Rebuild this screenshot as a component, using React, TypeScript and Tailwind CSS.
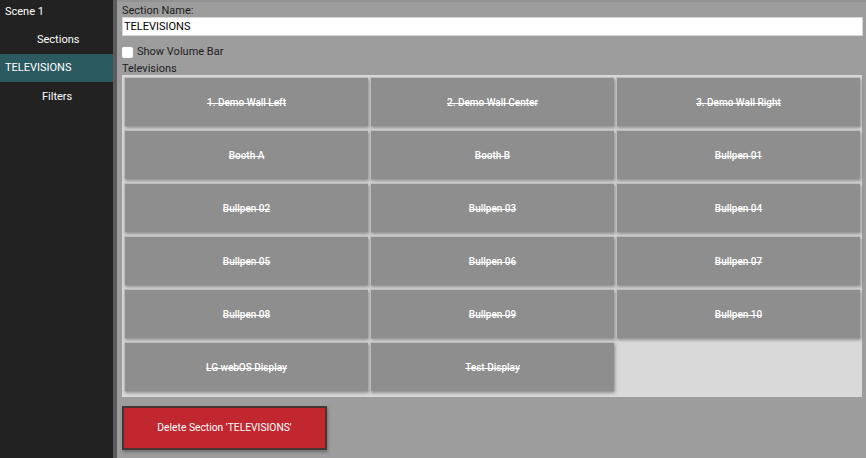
import React from "react";

const tvs = [
  "1. Demo Wall Left",
  "2. Demo Wall Center",
  "3. Demo Wall Right",
  "Booth A",
  "Booth B",
  "Bullpen 01",
  "Bullpen 02",
  "Bullpen 03",
  "Bullpen 04",
  "Bullpen 05",
  "Bullpen 06",
  "Bullpen 07",
  "Bullpen 08",
  "Bullpen 09",
  "Bullpen 10",
  "LG webOS Display",
  "Test Display",
];

export default function App() {
  return (
    <div
      className="flex w-[866px] h-[458px] overflow-hidden bg-[#9d9d9d] text-[11px]"
      style={{ fontFamily: "Roboto, 'Liberation Sans', sans-serif" }}
    >
      <div className="w-[113px] shrink-0 bg-[#222222] text-white flex flex-col">
        <div className="h-[24px] flex items-center pl-[5px]">Scene 1</div>
        <div className="h-[30px] flex items-center pl-[37px] pt-[2px]">Sections</div>
        <div className="h-[28px] flex items-center pl-[5px] bg-[#2b5a60]">TELEVISIONS</div>
        <div className="h-[30px] flex items-center pl-[42px]">Filters</div>
      </div>
      <div className="w-[4px] shrink-0 bg-[#5c5c5c]" />
      <div className="flex-1 flex flex-col pl-[5px] pr-[3px] border-t-2 border-[#929292] text-[#1e1e1e]">
        <div className="leading-[13px] mt-[2px]">Section Name:</div>
        <input
          readOnly
          value="TELEVISIONS"
          className="h-[19px] w-full bg-white border border-[#d6d6d6] px-[1px] text-[11px] text-black outline-none"
        />
        <div className="flex items-center mt-[10px] h-[12px]">
          <div className="w-[11px] h-[11px] bg-white rounded-[2px]" />
          <span className="ml-[4px]">Show Volume Bar</span>
        </div>
        <div className="leading-[13px] mt-[4px]">Televisions</div>
        <div className="grid grid-cols-3 gap-x-[2px] gap-y-[4px] bg-[#d9d9d9] p-[2px] pb-[6px] w-[740px]">
          {tvs.map((t) => (
            <div
              key={t}
              className="h-[49px] flex items-center justify-center bg-[#8e8e8e] text-white font-medium text-[10px] line-through shadow-[1px_2px_3px_rgba(0,0,0,0.35)] border-l-[1px] border-t-[1px] border-[#bdbdbd]"
            >
              {t}
            </div>
          ))}
        </div>
        <div className="mt-[9px] w-[205px] h-[44px] bg-[#c0272f] border-2 border-[#4a3333] text-white text-[10.3px] flex items-center justify-center shadow-[1px_2px_3px_rgba(0,0,0,0.3)]">
          Delete Section 'TELEVISIONS'
        </div>
      </div>
    </div>
  );
}
